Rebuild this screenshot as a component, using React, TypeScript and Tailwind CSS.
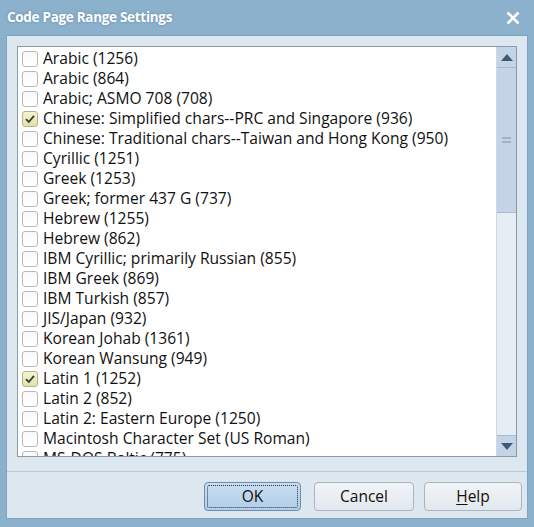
import React, { useState } from 'react';

const pages = [
  'Arabic (1256)',
  'Arabic (864)',
  'Arabic; ASMO 708 (708)',
  'Chinese: Simplified chars--PRC and Singapore (936)',
  'Chinese: Traditional chars--Taiwan and Hong Kong (950)',
  'Cyrillic (1251)',
  'Greek (1253)',
  'Greek; former 437 G (737)',
  'Hebrew (1255)',
  'Hebrew (862)',
  'IBM Cyrillic; primarily Russian (855)',
  'IBM Greek (869)',
  'IBM Turkish (857)',
  'JIS/Japan (932)',
  'Korean Johab (1361)',
  'Korean Wansung (949)',
  'Latin 1 (1252)',
  'Latin 2 (852)',
  'Latin 2: Eastern Europe (1250)',
  'Macintosh Character Set (US Roman)',
  'MS-DOS Baltic (775)',
];

const Check: React.FC<{ on: boolean }> = ({ on }) => (
  <div
    className={
      'w-[16px] h-[16px] rounded-[3px] border flex items-center justify-center shrink-0 ' +
      (on
        ? 'border-[#b4b48c] bg-gradient-to-b from-[#f4f4d4] to-[#e2e2a6]'
        : 'border-[#b8b8b8] bg-gradient-to-b from-[#fafafa] to-white')
    }
  >
    {on && (
      <svg width="12" height="12" viewBox="0 0 12 12">
        <path d="M2 6.2 L4.8 9 L10 2.8" fill="none" stroke="#3a3a3a" strokeWidth="1.8" />
      </svg>
    )}
  </div>
);

const App: React.FC = () => {
  const [checked, setChecked] = useState<Record<string, boolean>>({
    'Chinese: Simplified chars--PRC and Singapore (936)': true,
    'Latin 1 (1252)': true,
  });

  return (
    <div
      className="w-[534px] h-[527px] bg-[#8bb1cd] flex flex-col overflow-hidden"
      style={{ fontFamily: '"Open Sans", "Noto Sans", sans-serif' }}
    >
      {/* title bar */}
      <div className="h-[35px] flex items-center justify-between pl-[7px] pr-[14px] shrink-0">
        <span className="text-white font-bold text-[13.5px] tracking-[-0.3px] [text-shadow:0_0_3px_rgba(40,70,100,0.35)]">
          Code Page Range Settings
        </span>
        <svg width="14" height="14" viewBox="0 0 14 14">
          <path d="M1.5 1.5 L12.5 12.5 M12.5 1.5 L1.5 12.5" stroke="white" strokeWidth="2.6" />
        </svg>
      </div>

      {/* client */}
      <div className="mx-[6px] mb-[8px] flex-1 bg-[#dde7ef] border border-[#7fa3c0] flex flex-col">
        <div className="mt-[10px] mx-[10px] h-[411px] border border-[#8c9aa6] bg-white flex">
          <div className="flex-1 overflow-hidden pt-[2px]">
            {pages.map(p => (
              <div
                key={p}
                className="h-[20px] flex items-center gap-[5px] pl-[4px] text-[15.6px] text-[#111] whitespace-nowrap cursor-default"
                onClick={() => setChecked({ ...checked, [p]: !checked[p] })}
              >
                <Check on={!!checked[p]} />
                <span className="leading-none">{p}</span>
              </div>
            ))}
          </div>
          {/* scrollbar */}
          <div className="w-[20px] bg-[#e6edf4] border-l border-[#cdd8e2] flex flex-col">
            <div className="h-[21px] bg-[#c4d4e6] border-b border-[#a9bccf] flex items-center justify-center">
              <svg width="12" height="7" viewBox="0 0 12 7">
                <path d="M0 7 L6 0 L12 7 Z" fill="#3f5a74" />
              </svg>
            </div>
            <div className="h-[145px] bg-[#c4d4e6] border-b border-[#a9bccf] flex items-center justify-center">
              <svg width="9" height="6" viewBox="0 0 9 6">
                <path d="M0 1 H9 M0 5 H9" stroke="#7d93a8" strokeWidth="1" />
              </svg>
            </div>
            <div className="flex-1" />
            <div className="h-[21px] bg-[#c4d4e6] border-t border-[#a9bccf] flex items-center justify-center">
              <svg width="12" height="7" viewBox="0 0 12 7">
                <path d="M0 0 L6 7 L12 0 Z" fill="#3f5a74" />
              </svg>
            </div>
          </div>
        </div>

        <div className="mt-[14px] border-t border-[#b9c8d5]" />

        <div className="flex justify-end pr-[5px] pt-[10px]">
          <button className="w-[97px] h-[29px] rounded-[4px] border border-[#6b8fb0] bg-gradient-to-b from-[#c9def2] to-[#b1cde9] text-[15.5px] text-[#111] p-[2px]">
            <div className="w-full h-full border border-dotted border-[#333] rounded-[2px] flex items-center justify-center">
              OK
            </div>
          </button>
          <button className="ml-[13px] w-[100px] h-[29px] rounded-[4px] border border-[#a9b5c0] bg-gradient-to-b from-[#f1f4f7] to-[#e2e8ee] text-[15.5px] text-[#111]">
            Cancel
          </button>
          <button className="ml-[10px] w-[98px] h-[29px] rounded-[4px] border border-[#a9b5c0] bg-gradient-to-b from-[#f1f4f7] to-[#e2e8ee] text-[15.5px] text-[#111]">
            <span className="underline underline-offset-2">H</span>elp
          </button>
        </div>
      </div>
    </div>
  );
};

export default App;
